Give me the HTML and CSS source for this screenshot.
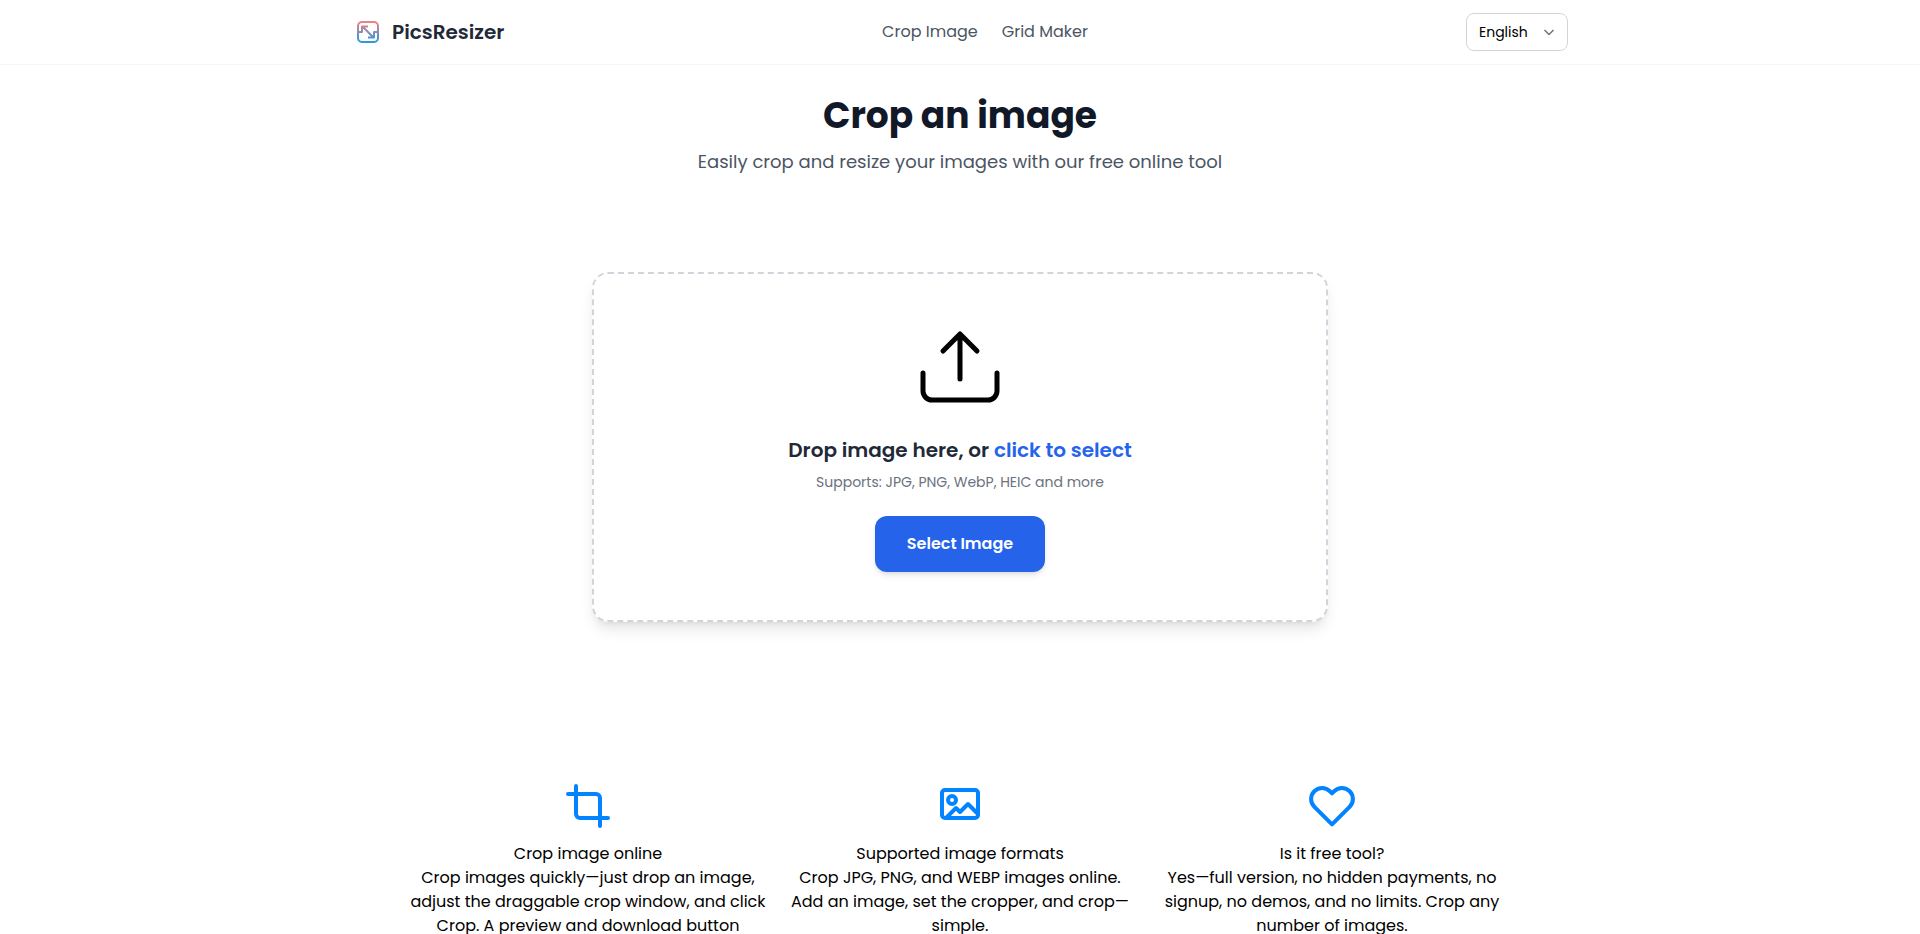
FILE: index.html
```html
<!DOCTYPE html>
<html lang="en">
<head>
<meta charset="utf-8">
<title>Crop an image - PicsResizer</title>
<meta name="viewport" content="width=device-width, initial-scale=1">
<link rel="stylesheet" href="styles.css">
</head>
<body>
<header class="header">
  <div class="header-inner">
    <a class="brand" href="#">
      <svg class="brand-icon" viewBox="0 0 32 32" fill="none" stroke="url(#brand)" stroke-width="2" stroke-linejoin="round" aria-hidden="true">
        <defs>
          <linearGradient id="brand" gradientUnits="userSpaceOnUse" x1="0" y1="5" x2="0" y2="27">
            <stop offset="0" stop-color="#f88080"/>
            <stop offset="1" stop-color="#1c9ae6"/>
          </linearGradient>
        </defs>
        <rect x="6" y="6" width="20" height="20" rx="4"/>
        <path d="M6 16h4v-5.5h6M26 16h-4v5.5h-6M10.500 10.500l11 11"/>
      </svg>
      <span>PicsResizer</span>
    </a>
    <nav class="nav">
      <a href="#">Crop Image</a>
      <a href="#">Grid Maker</a>
    </nav>
    <div class="language">
      <select class="language-select" aria-label="Language"><option>English</option></select>
      <svg class="language-chevron" viewBox="0 0 16 16" fill="none" stroke="#6b7280" stroke-width="1.5" aria-hidden="true"><path d="M3.500 6l4.500 4.500L12.500 6"/></svg>
    </div>
  </div>
</header>
<main>
  <section class="intro">
    <h1>Crop an image</h1>
    <p>Easily crop and resize your images with our free online tool</p>
  </section>
  <section class="upload">
    <div class="dropzone">
      <svg class="upload-icon" viewBox="0 0 96 96" fill="none" stroke="#000" stroke-width="5" stroke-linecap="round" stroke-linejoin="round" aria-hidden="true">
        <path d="M11 51v18a9 9 0 0 0 9 9h56a9 9 0 0 0 9-9V51M48 57V12M31 29l17-17 17 17"/>
      </svg>
      <p class="drop-title">Drop image here, or <a href="#">click to select</a></p>
      <p class="drop-note">Supports: JPG, PNG, WebP, HEIC and more</p>
      <button class="select-button" type="button">Select Image</button>
    </div>
  </section>
  <section class="features">
    <article class="feature">
      <svg class="feature-icon" viewBox="0 0 24 24" aria-hidden="true"><path d="M6 2v14a2 2 0 0 0 2 2h14M18 22V8a2 2 0 0 0-2-2H2"/></svg>
      <h2>Crop image online</h2>
      <p>Crop images quickly—just drop an image, adjust the draggable crop window, and click Crop. A preview and download button</p>
    </article>
    <article class="feature">
      <svg class="feature-icon" viewBox="0 0 24 24" aria-hidden="true"><rect x="3" y="4" width="18" height="14" rx="1.500"/><circle cx="8" cy="9" r="2"/><path stroke-linecap="butt" d="M5 18l5-5 2 2 4-4 5 5"/></svg>
      <h2>Supported image formats</h2>
      <p>Crop JPG, PNG, and WEBP images online. Add an image, set the cropper, and crop—<wbr>simple.</p>
    </article>
    <article class="feature">
      <svg class="feature-icon" viewBox="0 0 24 24" aria-hidden="true"><path d="M20.84 4.61a5.5 5.5 0 0 0-7.78 0L12 5.67l-1.06-1.06a5.5 5.5 0 0 0-7.78 7.78l1.06 1.06L12 21.23l7.78-7.78 1.06-1.06a5.5 5.5 0 0 0 0-7.78z"/></svg>
      <h2>Is it free tool?</h2>
      <p>Yes—full version, no hidden payments, no signup, no demos, and no limits. Crop any number of images.</p>
    </article>
  </section>
</main>
</body>
</html>
```
FILE: styles.css
```css
* { box-sizing: border-box; }
body {
  margin: 0;
  background: #fff;
  color: #000;
  font: 16px/24px Poppins, Inter, sans-serif;
}
h1, h2, p { margin: 0; }
a { color: inherit; text-decoration: none; }
svg { display: block; }

.header { border-bottom: 1px solid #f3f4f6; }
.header-inner {
  display: grid;
  grid-template-columns: 1fr auto 1fr;
  align-items: center;
  max-width: 1280px;
  height: 64px;
  margin: 0 auto;
  padding: 0 32px;
}
.brand {
  display: flex;
  align-items: center;
  gap: 8px;
  color: #1f2937;
  font-size: 20px;
  font-weight: 600;
}
.brand-icon { width: 32px; height: 32px; }
.nav { display: flex; gap: 24px; padding-left: 50px; color: #4b5563; }
.language { position: relative; justify-self: end; }
.language-select {
  appearance: none;
  width: 102px;
  height: 38px;
  padding: 0 12px;
  border: 1px solid #d1d5db;
  border-radius: 8px;
  background: #fff;
  color: #000;
  font: 14px/20px Poppins, Inter, sans-serif;
}
.language-chevron {
  position: absolute;
  top: 11px;
  right: 11px;
  width: 16px;
  height: 16px;
  pointer-events: none;
}

.intro { padding: 31px 16px 0; text-align: center; }
.intro h1 {
  color: #111827;
  font-size: 36px;
  line-height: 40px;
  font-weight: 700;
}
.intro p { margin-top: 12px; color: #4b5563; font-size: 18px; line-height: 28px; }

.upload { max-width: 768px; margin: 96px auto 0; padding: 0 16px; }
.dropzone {
  display: flex;
  flex-direction: column;
  align-items: center;
  padding: 48px;
  border: 2px dashed #d1d5db;
  border-radius: 16px;
  background: #fff;
  box-shadow: 0 10px 15px -3px rgba(0, 0, 0, .1), 0 4px 6px -4px rgba(0, 0, 0, .1);
  text-align: center;
}
.upload-icon { width: 96px; height: 96px; }
.drop-title {
  margin-top: 18px;
  color: #1f2937;
  font-size: 20px;
  line-height: 28px;
  font-weight: 600;
}
.drop-title a { color: #2563eb; }
.drop-note { margin-top: 8px; color: #6b7280; font-size: 14px; line-height: 20px; }
.select-button {
  margin-top: 24px;
  padding: 16px 32px;
  border: 0;
  border-radius: 12px;
  background: #2563eb;
  box-shadow: 0 4px 6px -1px rgba(0, 0, 0, .1), 0 2px 4px -2px rgba(0, 0, 0, .1);
  color: #fff;
  font: 600 16px/24px Poppins, Inter, sans-serif;
}

.features {
  display: grid;
  grid-template-columns: repeat(3, 1fr);
  gap: 16px;
  max-width: 1132px;
  margin: 160px auto 0;
  padding: 0 16px;
  text-align: center;
}
.feature { display: flex; flex-direction: column; align-items: center; }
.feature-icon {
  width: 48px;
  height: 48px;
  margin-bottom: 12px;
  fill: none;
  stroke: #0384ff;
  stroke-width: 2;
  stroke-linecap: round;
  stroke-linejoin: round;
}
.feature h2 { font-size: 16px; line-height: 24px; font-weight: 400; }
```
